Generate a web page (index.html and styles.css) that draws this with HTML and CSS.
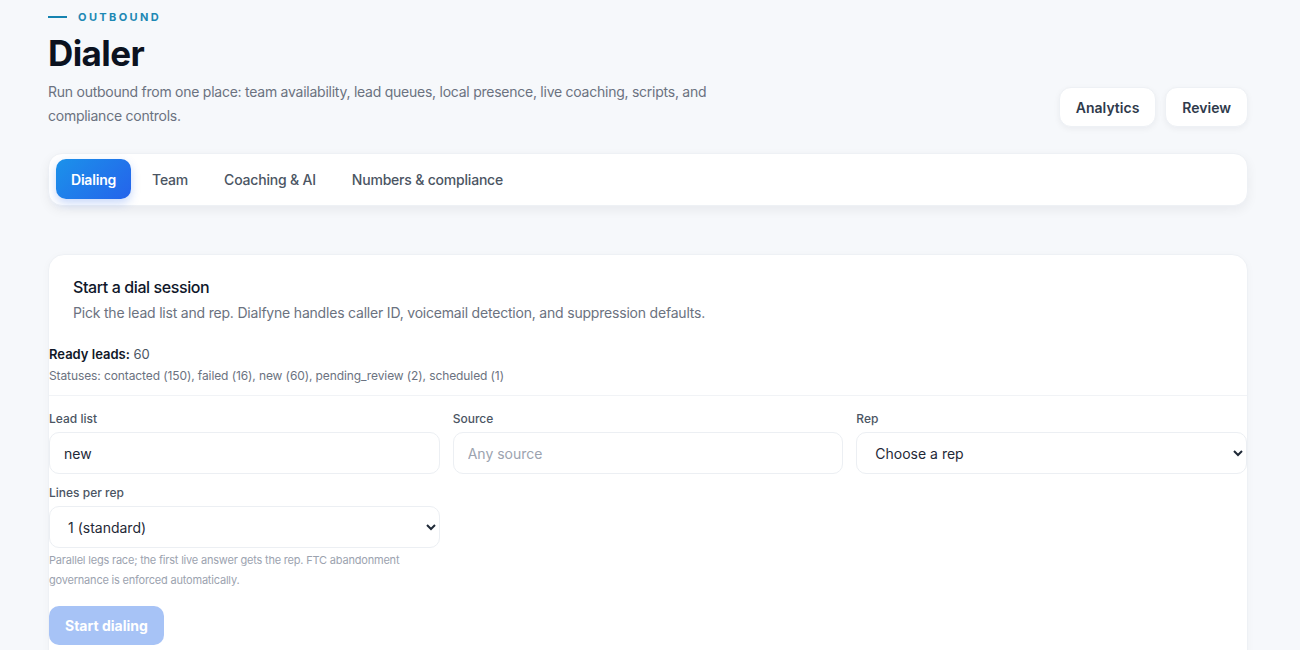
FILE: index.html
```html
<!DOCTYPE html>
<html lang="en">
<head>
    <meta charset="UTF-8">
    <meta name="viewport" content="width=device-width, initial-scale=1.0">
    <title>Dialer</title>
    <link rel="stylesheet" href="styles.css">
</head>
<body>
    <div class="page">
        <header class="page-head">
            <div class="head-text">
                <div class="eyebrow"><span class="eyebrow-line"></span>OUTBOUND</div>
                <h1>Dialer</h1>
                <p class="lead">Run outbound from one place: team availability, lead queues, local presence, live coaching, scripts, and compliance controls.</p>
            </div>
            <div class="head-actions">
                <button class="ghost-btn" type="button">Analytics</button>
                <button class="ghost-btn" type="button">Review</button>
            </div>
        </header>

        <nav class="tabs">
            <button class="tab active" type="button">Dialing</button>
            <button class="tab" type="button">Team</button>
            <button class="tab" type="button">Coaching &amp; AI</button>
            <button class="tab" type="button">Numbers &amp; compliance</button>
        </nav>

        <section class="card">
            <div class="card-head">
                <h2>Start a dial session</h2>
                <p>Pick the lead list and rep. Dialfyne handles caller ID, voicemail detection, and suppression defaults.</p>
            </div>
            <div class="card-body">
                <div class="ready">
                    <p class="ready-count"><strong>Ready leads:</strong> 60</p>
                    <p class="ready-statuses">Statuses: contacted (150), failed (16), new (60), pending_review (2), scheduled (1)</p>
                </div>
                <form class="session-form">
                    <div class="field">
                        <label for="lead-list">Lead list</label>
                        <input type="text" id="lead-list" value="new">
                    </div>
                    <div class="field">
                        <label for="source">Source</label>
                        <input type="text" id="source" placeholder="Any source">
                    </div>
                    <div class="field">
                        <label for="rep">Rep</label>
                        <select id="rep">
                            <option>Choose a rep</option>
                        </select>
                    </div>
                    <div class="field">
                        <label for="lines">Lines per rep</label>
                        <select id="lines">
                            <option>1 (standard)</option>
                            <option>2</option>
                            <option>3</option>
                        </select>
                        <p class="hint">Parallel legs race; the first live answer gets the rep. FTC abandonment governance is enforced automatically.</p>
                    </div>
                </form>
                <button class="start-btn" type="button" disabled>Start dialing</button>
            </div>
        </section>
    </div>
</body>
</html>
```

FILE: styles.css
```css
/* Basic Reset */
* {
    margin: 0;
    padding: 0;
    box-sizing: border-box;
}

body {
    font-family: Inter, "Noto Sans", sans-serif;
    background-color: #f6f8fb;
    color: #0f172a;
}

.page {
    width: 1200px;
    margin-left: 48px;
    padding-top: 10px;
}

/* Header */
.page-head {
    display: flex;
    justify-content: space-between;
    align-items: flex-start;
}

.eyebrow {
    display: flex;
    align-items: center;
    gap: 11px;
    font-size: 11px;
    font-weight: 700;
    letter-spacing: 2.4px;
    color: #1d88b4;
    height: 14px;
}

.eyebrow-line {
    width: 19px;
    height: 2px;
    background-color: #1683b0;
}

h1 {
    font-size: 35px;
    font-weight: 700;
    letter-spacing: -0.6px;
    color: #0b1220;
    line-height: 44px;
    margin-top: 7px;
}

.lead {
    font-size: 14px;
    line-height: 24px;
    color: #6b7280;
    max-width: 690px;
    margin-top: 5px;
    letter-spacing: -0.25px;
}

.head-actions {
    display: flex;
    gap: 9px;
    margin-top: 77px;
}

.ghost-btn {
    font-family: inherit;
    font-size: 14px;
    font-weight: 600;
    color: #2f3a4b;
    background-color: #fff;
    border: 1px solid #eef1f5;
    border-radius: 12px;
    height: 40px;
    padding: 0 16px;
    box-shadow: 0 2px 6px rgba(15, 23, 42, 0.05);
}

/* Tabs */
.tabs {
    display: flex;
    gap: 6px;
    margin-top: 25px;
    padding: 5px 7px 6px;
    background-color: #fff;
    border: 1px solid #eef1f5;
    border-radius: 14px;
    box-shadow: 0 4px 12px rgba(15, 23, 42, 0.06);
}

.tab {
    font-family: inherit;
    font-size: 14px;
    font-weight: 500;
    color: #4b5563;
    background: none;
    border: none;
    border-radius: 10px;
    height: 40px;
    padding: 0 15px;
    letter-spacing: -0.2px;
}

.tab.active {
    color: #fff;
    font-weight: 600;
    background: linear-gradient(135deg, #1b92ea, #2563eb);
    box-shadow: 0 4px 10px rgba(37, 99, 235, 0.25);
}

/* Card */
.card {
    margin-top: 48px;
    background-color: #fff;
    border: 1px solid #eef1f5;
    border-radius: 16px;
    box-shadow: 0 2px 8px rgba(15, 23, 42, 0.03);
}

.card-head {
    padding: 22px 24px 0;
}

.card-head h2 {
    font-size: 16px;
    font-weight: 500;
    color: #0f172a;
    line-height: 20px;
    letter-spacing: -0.4px;
}

.card-head p {
    font-size: 14px;
    color: #6b7280;
    line-height: 20px;
    margin-top: 6px;
    letter-spacing: -0.2px;
}

.card-body {
    padding-bottom: 24px;
}

.ready {
    padding: 21px 0 10px;
    border-bottom: 1px solid #f1f3f6;
}

.ready-count {
    font-size: 13px;
    line-height: 20px;
    color: #4b5563;
}

.ready-count strong {
    font-weight: 600;
    color: #111827;
}

.ready-statuses {
    font-size: 12px;
    line-height: 18px;
    color: #6b7280;
    margin-top: 3px;
    letter-spacing: -0.1px;
}

.session-form {
    display: grid;
    grid-template-columns: repeat(3, 1fr);
    column-gap: 13px;
    row-gap: 11px;
    margin-top: 15px;
}

.field label {
    display: block;
    font-size: 12px;
    font-weight: 500;
    color: #4b5563;
    line-height: 16px;
    margin-bottom: 5px;
}

.field input,
.field select {
    width: 100%;
    height: 42px;
    font-family: inherit;
    font-size: 14px;
    color: #1f2937;
    background-color: #fff;
    border: 1px solid #eceff3;
    border-radius: 10px;
    padding: 0 14px;
}

.field select {
    padding-left: 14px;
}

.field input::placeholder {
    color: #9ca3af;
}

.hint {
    font-size: 11px;
    line-height: 20px;
    color: #9ca3af;
    margin-top: 2px;
    letter-spacing: -0.2px;
}

.start-btn {
    font-family: inherit;
    font-size: 14px;
    font-weight: 700;
    color: #fff;
    background-color: #a7c3f6;
    border: none;
    border-radius: 10px;
    height: 39px;
    padding: 0 16px;
    margin-top: 16px;
}
```
